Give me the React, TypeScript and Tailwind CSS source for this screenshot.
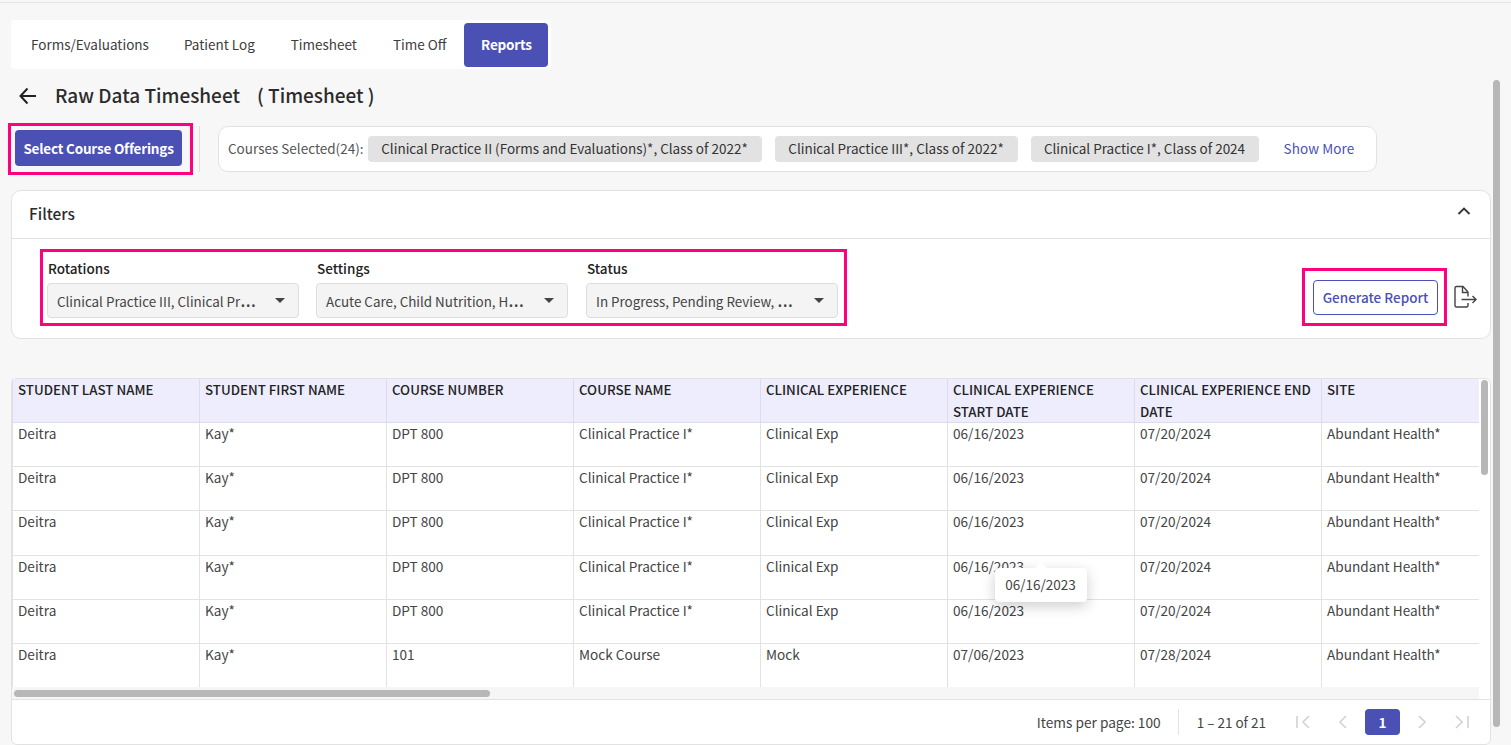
import React from "react";

const font = { fontFamily: '"Noto Sans CJK JP", "Noto Sans", sans-serif' };

const columns = [
  "STUDENT LAST NAME",
  "STUDENT FIRST NAME",
  "COURSE NUMBER",
  "COURSE NAME",
  "CLINICAL EXPERIENCE",
  "CLINICAL EXPERIENCE START DATE",
  "CLINICAL EXPERIENCE END DATE",
  "SITE",
];

const base = ["Deitra", "Kay*", "DPT 800", "Clinical Practice I*", "Clinical Exp", "06/16/2023", "07/20/2024", "Abundant Health*"];
const rows = [
  base,
  base,
  base,
  base,
  base,
  ["Deitra", "Kay*", "101", "Mock Course", "Mock", "07/06/2023", "07/28/2024", "Abundant Health*"],
];

function Caret() {
  return <span className="w-0 h-0 border-l-[5px] border-r-[5px] border-t-[5px] border-l-transparent border-r-transparent border-t-[#444] shrink-0" />;
}

function Select({ label, value, className }: { label: string; value: string; className?: string }) {
  return (
    <div className={`flex flex-col w-[252px] ${className ?? ""}`}>
      <div className="text-[13.5px] leading-[20px] font-medium text-[#222] pl-[1px]">{label}</div>
      <div className="mt-[5px] h-[35px] flex items-center justify-between pl-[9px] pr-[13px] bg-[#f4f4f4] border border-[#dedede] rounded-[4px]">
        <span className="text-[13.4px] text-[#444] whitespace-nowrap">
          {value}
          <span className="font-['Noto_Sans'] text-[20px] leading-none">…</span>
        </span>
        <Caret />
      </div>
    </div>
  );
}

function Chip({ children, width }: { children: React.ReactNode; width: string }) {
  return <span className={`h-[26px] flex items-center justify-center pb-[2px] bg-[#e2e2e2] rounded-[4px] text-[13.5px] text-[#333] whitespace-nowrap ${width}`}>{children}</span>;
}

function PageIcon({ d }: { d: string }) {
  return (
    <svg width="20" height="20" viewBox="0 0 20 20" fill="none" stroke="#d2d2d2" strokeWidth="1.6">
      <path d={d} />
    </svg>
  );
}

export default function App() {
  return (
    <div style={font} className="relative h-[745px] w-[1511px] overflow-hidden bg-[#f7f7f7]">
      <div className="mt-[2px] h-px bg-[#e4e4e4]" />
      <div className="pl-[11px] w-[1491px] flex flex-col items-start">
        {/* Tabs */}
        <div className="mt-[17px] h-[49px] w-[540px] bg-white rounded-[4px] flex items-center text-[13.5px] text-[#3c3c3c] whitespace-nowrap">
          <span className="ml-[20px]">Forms/Evaluations</span>
          <span className="ml-[35px]">Patient Log</span>
          <span className="ml-[36px]">Timesheet</span>
          <span className="ml-[36px]">Time Off</span>
          <span className="ml-[18px] w-[84px] h-[44px] flex items-center justify-center rounded-[4px] bg-[#4a50b4] text-white font-bold tracking-[-0.2px]">Reports</span>
        </div>

        {/* Title */}
        <div className="mt-[11px] h-[30px] flex items-center text-[#2b2b2b]">
          <svg width="20" height="20" viewBox="0 0 20 20" fill="none" stroke="#222" strokeWidth="2" className="ml-[7px] mt-[1px]">
            <path d="M18 10H2.5M9.5 2.5L2.5 10l7 7.5" />
          </svg>
          <span className="ml-[17px] text-[19px] font-medium whitespace-pre">Raw Data Timesheet    ( Timesheet )</span>
        </div>

        {/* Courses */}
        <div className="mt-[13px] flex items-center h-[52px] -ml-[3px]">
          <div className="w-[185px] h-[52px] border-[3px] border-[#ff0080] flex items-start pl-[4px] pt-[4px]">
            <span className="w-[167px] h-[36px] flex items-center justify-center rounded-[4px] bg-[#4a50b4] text-white text-[13.5px] font-bold tracking-[-0.2px] whitespace-nowrap">Select Course Offerings</span>
          </div>
          <div className="ml-[6px] w-px h-[46px] bg-[#dedede]" />
          <div className="ml-[18px] w-[1159px] h-[46px] bg-white border border-[#e2e2e2] rounded-[10px] flex items-center pl-[9px] text-[13.5px] text-[#555] whitespace-nowrap">
            <span className="mr-[4px] pb-[2px]">Courses Selected(24):</span>
            <Chip width="w-[394px]">Clinical Practice II (Forms and Evaluations)*, Class of 2022*</Chip>
            <span className="w-[13px]" />
            <Chip width="w-[243px]">Clinical Practice III*, Class of 2022*</Chip>
            <span className="w-[13px]" />
            <Chip width="w-[228px]">Clinical Practice I*, Class of 2024</Chip>
            <span className="ml-[25px] pb-[2px] text-[#4a50b4] tracking-[0.1px]">Show More</span>
          </div>
        </div>

        {/* Filters */}
        <div className="mt-[15px] w-[1480px] h-[149px] bg-white border border-[#e2e2e2] rounded-[10px] flex flex-col">
          <div className="h-[48px] shrink-0 border-b border-[#e2e2e2] flex items-center justify-between pl-[17px] pr-[19px]">
            <span className="text-[15.4px] font-medium text-[#2b2b2b] -mt-[2px]">Filters</span>
            <svg width="14" height="14" viewBox="0 0 14 14" fill="none" stroke="#333" strokeWidth="1.8" className="-mt-[8px]">
              <path d="M1.5 10L7 4.5 12.5 10" />
            </svg>
          </div>
          <div className="relative flex items-start">
            <div className="ml-[28px] mt-[10px] w-[807px] h-[77px] border-[3px] border-[#ff0080] flex pl-[4px] pt-[6px] gap-[17px]">
              <Select label="Rotations" value="Clinical Practice III, Clinical Pr" />
              <Select label="Settings" value="Acute Care, Child Nutrition, H" />
              <Select label="Status" value="In Progress, Pending Review, " className="ml-px" />
            </div>
            <div className="ml-auto mt-[29px] mr-[13px] flex items-start">
              <div className="w-[145px] h-[58px] border-[3px] border-[#ff0080] flex items-center justify-center">
                <span className="ml-[2px] w-[125px] h-[35px] flex items-center justify-center border border-[#4a50b4] rounded-[4px] text-[13.5px] font-medium text-[#4a50b4] whitespace-nowrap">Generate Report</span>
              </div>
              <svg width="24" height="24" viewBox="0 0 24 24" fill="none" stroke="#444" strokeWidth="1.4" className="ml-[6px] mt-[17px]">
                <path d="M15 11.5V7l-5-5.5H3.5A1.5 1.5 0 0 0 2 3v17.5A1.5 1.5 0 0 0 3.5 22H13.5A1.5 1.5 0 0 0 15 20.5V18" />
                <path d="M9.5 2v5.5H15" />
                <path d="M8.5 14.5H23M19.5 11l3.5 3.5-3.5 3.5" />
              </svg>
            </div>
          </div>
        </div>

        {/* Table card */}
        <div className="mt-[39px] w-[1480px] h-[367px] bg-white border border-[#e2e2e2] rounded-[6px] flex flex-col shrink-0">
          <div className="h-[320px] overflow-hidden flex flex-col w-[1467px] shrink-0">
            <div className="flex-1 overflow-hidden">
              <table className="table-fixed w-[1496px] border-collapse text-[13.5px]">
                <thead>
                  <tr className="h-[43px] bg-[#ededfd] text-[#222] border-b border-[#dcdcec] leading-[21.5px]">
                    {columns.map((c) => (
                      <th key={c} className="w-[187px] align-top text-left font-medium text-[13.3px] pl-[5px] pr-[4px] border-r border-l border-[#dcdcec]">{c}</th>
                    ))}
                  </tr>
                </thead>
                <tbody>
                  {rows.map((r, i) => (
                    <tr key={i} className={`${i === 2 ? "h-[45px]" : "h-[44px]"} border-b border-[#e2e2e2] leading-[20px]`}>
                      {r.map((v, j) => (
                        <td key={j} className="align-top pl-[5px] pr-[4px] text-[13.6px] text-[#444] border-r border-l border-[#e2e2e2]">{v}</td>
                      ))}
                    </tr>
                  ))}
                </tbody>
              </table>
            </div>
            <div className="h-[12px] shrink-0 bg-[#f6f6f6] flex items-center pl-[2px]">
              <div className="w-[476px] h-[7px] rounded-full bg-[#b7b7b7]" />
            </div>
          </div>
          <div className="flex-1 border-t border-[#e2e2e2] flex items-center justify-end text-[13.5px] text-[#444] pr-[19px]">
            <span className="text-[13.7px]">Items per page: 100</span>
            <span className="ml-[17px] w-px h-[26px] bg-[#e2e2e2]" />
            <span className="ml-[18px]">1 – 21 of 21</span>
            <span className="ml-[28px] flex items-center">
              <PageIcon d="M3 4v12M15 4l-6 6 6 6" />
            </span>
            <span className="ml-[19px]"><PageIcon d="M13 4l-6 6 6 6" /></span>
            <span className="ml-[12px] w-[35px] h-[26px] flex items-center justify-center rounded-[4px] bg-[#4a50b4] text-white font-bold">1</span>
            <span className="ml-[12px]"><PageIcon d="M7 4l6 6-6 6" /></span>
            <span className="ml-[19px]"><PageIcon d="M5 4l6 6-6 6M17 4v12" /></span>
          </div>
        </div>
      </div>

      {/* Overlay scrollbars */}
      <div className="absolute left-[1481px] top-[380px] w-[7px] h-[95px] rounded-full bg-[#b7b7b7]" />
      <div className="absolute left-[1493px] top-[80px] w-[7px] h-[647px] rounded-full bg-[#b7b7b7]" />

      {/* Tooltip */}
      <div className="absolute left-[995px] top-[568px] w-[92px] h-[34px] pb-[1px] pr-[1px] bg-white rounded-[4px] shadow-[0_4px_14px_rgba(0,0,0,0.2)] flex items-center justify-center text-[13.5px] text-[#444]">
        <span className="absolute -top-[6px] left-[40px] w-0 h-0 border-l-[6px] border-r-[6px] border-b-[6px] border-l-transparent border-r-transparent border-b-white" />
        06/16/2023
      </div>
    </div>
  );
}
